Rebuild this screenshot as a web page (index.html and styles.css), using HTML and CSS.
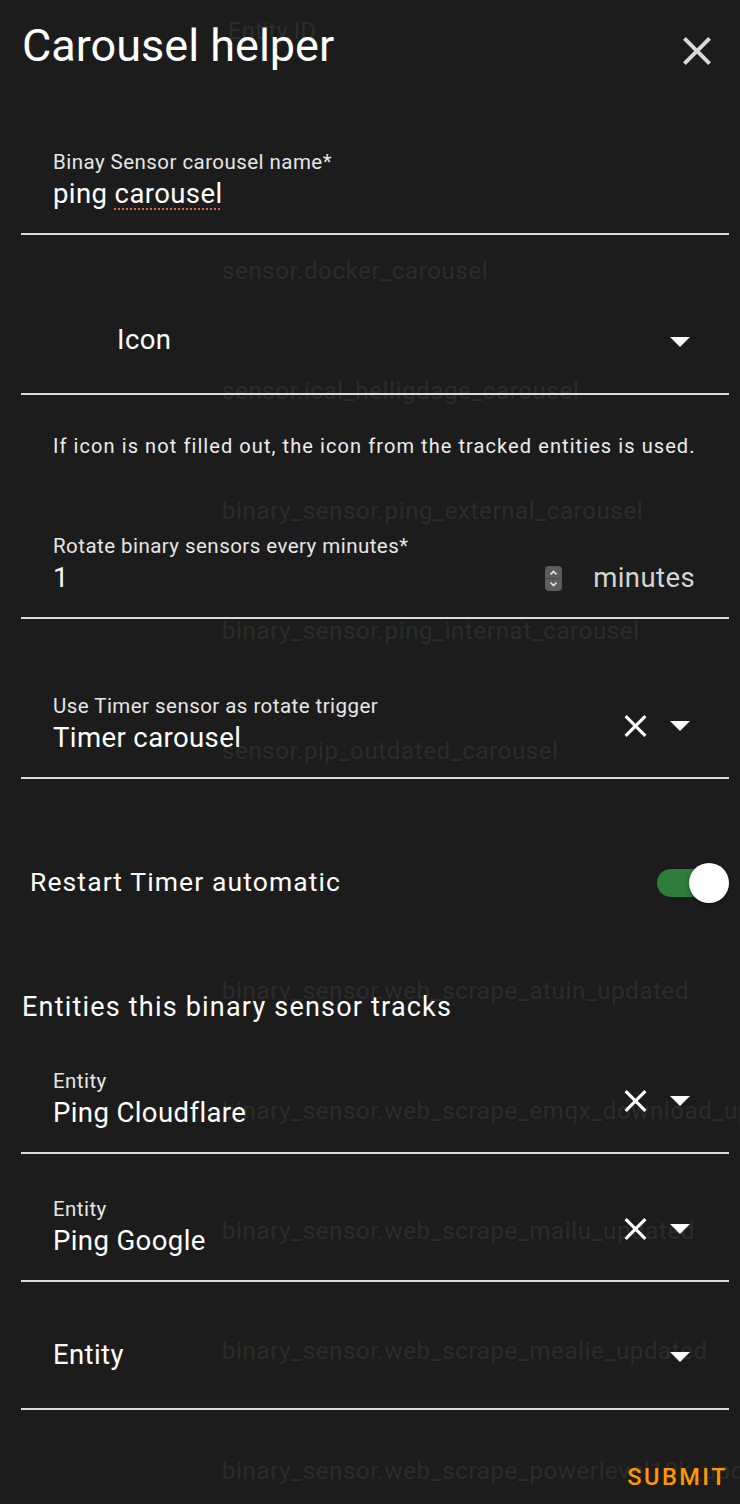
FILE: index.html
```html
<!DOCTYPE html>
<html lang="en">
<head>
<meta charset="utf-8">
<title>Carousel helper</title>
<link rel="stylesheet" href="styles.css">
</head>
<body>
<div class="screen">
  <div class="ghost" aria-hidden="true">
    <div class="ghost-row ghost-head">Entity ID</div>
    <div class="ghost-row"></div>
    <div class="ghost-row">sensor.docker_carousel</div>
    <div class="ghost-row">sensor.ical_helligdage_carousel</div>
    <div class="ghost-row">binary_sensor.ping_external_carousel</div>
    <div class="ghost-row">binary_sensor.ping_internat_carousel</div>
    <div class="ghost-row">sensor.pip_outdated_carousel</div>
    <div class="ghost-row"></div>
    <div class="ghost-row">binary_sensor.web_scrape_atuin_updated</div>
    <div class="ghost-row">binary_sensor.web_scrape_emqx_download_updated</div>
    <div class="ghost-row">binary_sensor.web_scrape_mailu_updated</div>
    <div class="ghost-row">binary_sensor.web_scrape_mealie_updated</div>
    <div class="ghost-row">binary_sensor.web_scrape_powerlevel10k_updated</div>
  </div>

  <div class="dialog">
    <header class="dlg-header">
      <h1 class="dlg-title">Carousel helper</h1>
      <span class="close-btn">
        <svg viewBox="5 5 14 14" width="28" height="28"><path d="M19,6.41L17.59,5L12,10.59L6.41,5L5,6.41L10.59,12L5,17.59L6.41,19L12,13.41L17.59,19L19,17.59L13.41,12L19,6.41Z"/></svg>
      </span>
    </header>

    <div class="field">
      <div class="field-body">
        <div class="field-label">Binay Sensor carousel name*</div>
        <div class="field-value">ping <span class="misspelled">carousel</span></div>
      </div>
    </div>

    <div class="field field-nolabel field-icon">
      <div class="field-body">
        <div class="field-value">Icon</div>
      </div>
      <div class="field-actions">
        <svg class="tri" viewBox="0 0 20 10" width="20" height="10"><path d="M0 0H20L10 10Z"/></svg>
      </div>
    </div>

    <p class="helper">If icon is not filled out, the icon from the tracked entities is used.</p>

    <div class="field">
      <div class="field-body">
        <div class="field-label">Rotate binary sensors every minutes*</div>
        <div class="value-row">
          <div class="field-value grow">1</div>
          <svg class="spinner" viewBox="0 0 17 25" width="17" height="25">
            <rect x="0" y="0" width="17" height="25" rx="4" fill="#5c5c5c"/>
            <line x1="0" y1="12.5" x2="17" y2="12.5" stroke="#4a4a4a" stroke-width="1"/>
            <path d="M5.5 8.5L8.5 5.5L11.5 8.5" fill="none" stroke="#e6e6e6" stroke-width="1.6"/>
            <path d="M5.5 16.5L8.5 19.5L11.5 16.5" fill="none" stroke="#e6e6e6" stroke-width="1.6"/>
          </svg>
          <span class="suffix">minutes</span>
        </div>
      </div>
    </div>

    <div class="field field-after">
      <div class="field-body">
        <div class="field-label">Use Timer sensor as rotate trigger</div>
        <div class="field-value">Timer carousel</div>
      </div>
      <div class="field-actions">
        <svg class="clear" viewBox="5 5 14 14" width="23" height="22"><path d="M19,6.41L17.59,5L12,10.59L6.41,5L5,6.41L10.59,12L5,17.59L6.41,19L12,13.41L17.59,19L19,17.59L13.41,12L19,6.41Z"/></svg>
        <svg class="tri" viewBox="0 0 20 10" width="20" height="10"><path d="M0 0H20L10 10Z"/></svg>
      </div>
    </div>

    <div class="toggle-row">
      <span class="toggle-label">Restart Timer automatic</span>
      <span class="switch"><span class="switch-track"></span><span class="switch-knob"></span></span>
    </div>

    <h2 class="section-title">Entities this binary sensor tracks</h2>

    <div class="entity-list">
      <div class="field">
        <div class="field-body">
          <div class="field-label">Entity</div>
          <div class="field-value">Ping Cloudflare</div>
        </div>
        <div class="field-actions">
          <svg class="clear" viewBox="5 5 14 14" width="23" height="22"><path d="M19,6.41L17.59,5L12,10.59L6.41,5L5,6.41L10.59,12L5,17.59L6.41,19L12,13.41L17.59,19L19,17.59L13.41,12L19,6.41Z"/></svg>
          <svg class="tri" viewBox="0 0 20 10" width="20" height="10"><path d="M0 0H20L10 10Z"/></svg>
        </div>
      </div>
      <div class="field">
        <div class="field-body">
          <div class="field-label">Entity</div>
          <div class="field-value">Ping Google</div>
        </div>
        <div class="field-actions">
          <svg class="clear" viewBox="5 5 14 14" width="23" height="22"><path d="M19,6.41L17.59,5L12,10.59L6.41,5L5,6.41L10.59,12L5,17.59L6.41,19L12,13.41L17.59,19L19,17.59L13.41,12L19,6.41Z"/></svg>
          <svg class="tri" viewBox="0 0 20 10" width="20" height="10"><path d="M0 0H20L10 10Z"/></svg>
        </div>
      </div>
      <div class="field field-nolabel">
        <div class="field-body">
          <div class="field-value">Entity</div>
        </div>
        <div class="field-actions">
          <svg class="tri" viewBox="0 0 20 10" width="20" height="10"><path d="M0 0H20L10 10Z"/></svg>
        </div>
      </div>
    </div>

    <div class="dlg-actions">
      <span class="submit">SUBMIT</span>
    </div>
  </div>
</div>
</body>
</html>
```

FILE: styles.css
```css
* { box-sizing: border-box; }

html, body {
  margin: 0;
  padding: 0;
  background: #1c1c1c;
}

body {
  font-family: Roboto, "Noto Sans", "Liberation Sans", sans-serif;
  color: #ffffff;
}

.screen {
  position: relative;
  width: 740px;
  height: 1504px;
  overflow: hidden;
  background: #1c1c1c;
}

/* page list showing faintly through the dialog */
.ghost {
  position: absolute;
  top: -29px;
  left: 0;
  right: 0;
  padding-left: 222px;
  color: #2c2c2c;
  font-size: 24px;
  letter-spacing: 0.64px;
  white-space: nowrap;
  z-index: 0;
}

.ghost-row {
  height: 120px;
  line-height: 120px;
}

.ghost-head {
  padding-left: 6px;
  letter-spacing: 0;
}

.dialog {
  position: relative;
  z-index: 1;
  display: flex;
  flex-direction: column;
}

.dlg-header {
  display: flex;
  align-items: flex-start;
  justify-content: space-between;
  padding: 23px 29px 0 22px;
  height: 123px;
}

.dlg-title {
  margin: 0;
  font-size: 45px;
  line-height: 45px;
  font-weight: 400;
  color: #ffffff;
}

.close-btn {
  display: flex;
  margin-top: 14px;
  fill: #d9d9d9;
}

/* text fields */
.field {
  display: flex;
  margin-left: 21px;
  width: 708px;
  height: 112px;
  border-bottom: 2px solid #dcdcdc;
  flex-shrink: 0;
}

.field-body {
  flex: 1;
  display: flex;
  flex-direction: column;
  padding-left: 32px;
  padding-top: 27px;
}

.field-label {
  font-size: 20.5px;
  line-height: 24px;
  letter-spacing: 0.45px;
  color: #e6e6e6;
  white-space: nowrap;
}

.field-value {
  margin-top: 4px;
  font-size: 27.5px;
  line-height: 32px;
  letter-spacing: 0.4px;
  color: #ffffff;
  white-space: nowrap;
}

.field-nolabel .field-body {
  justify-content: center;
  padding-top: 3px;
}

.field-nolabel .field-value {
  margin-top: 0;
}

.field-icon .field-body {
  padding-left: 96px;
}

.field-actions {
  display: flex;
  align-items: center;
  padding-top: 8px;
  padding-right: 39px;
  gap: 23px;
}

.clear { fill: #ffffff; }
.tri { fill: #ffffff; }

.misspelled {
  text-decoration: underline dotted #e06060;
  text-decoration-thickness: 2px;
  text-underline-offset: 5px;
}

.field-icon { margin-top: 48px; }

.helper {
  margin: 37px 0 47px 53px;
  font-size: 20px;
  line-height: 28px;
  letter-spacing: 1.08px;
  color: #ececec;
}

.value-row {
  display: flex;
  align-items: center;
  margin-top: 4px;
  padding-right: 34px;
}

.value-row .field-value { margin-top: 0; }

.grow { flex: 1; }

.spinner {
  margin-right: 31px;
}

.suffix {
  font-size: 27.5px;
  line-height: 32px;
  letter-spacing: 0.4px;
  color: #d4d4d4;
}

.field-after { margin-top: 48px; }

/* toggle */
.toggle-row {
  display: flex;
  align-items: center;
  justify-content: space-between;
  margin: 76px 11px 0 30px;
  height: 56px;
}

.toggle-label {
  font-size: 26.5px;
  line-height: 32px;
  letter-spacing: 1.1px;
  color: #ffffff;
  margin-top: -3px;
}

.switch {
  position: relative;
  display: flex;
  align-items: center;
  width: 72px;
  height: 40px;
}

.switch-track {
  width: 58px;
  height: 28px;
  border-radius: 14px;
  background: #2e7d3a;
}

.switch-knob {
  position: absolute;
  right: 0;
  top: 0;
  width: 40px;
  height: 40px;
  border-radius: 50%;
  background: #ffffff;
  box-shadow: 0 2px 4px rgba(0,0,0,0.45);
}

.section-title {
  margin: 78px 0 17px 22px;
  font-size: 27px;
  line-height: 36px;
  letter-spacing: 1.2px;
  font-weight: 400;
  color: #ffffff;
}

.entity-list {
  display: flex;
  flex-direction: column;
  gap: 16px;
}

.dlg-actions {
  display: flex;
  justify-content: flex-end;
  margin-top: 47px;
  padding-right: 12px;
}

.submit {
  font-size: 23.5px;
  line-height: 40px;
  font-weight: 500;
  letter-spacing: 2.5px;
  color: #ff9800;
}
```
